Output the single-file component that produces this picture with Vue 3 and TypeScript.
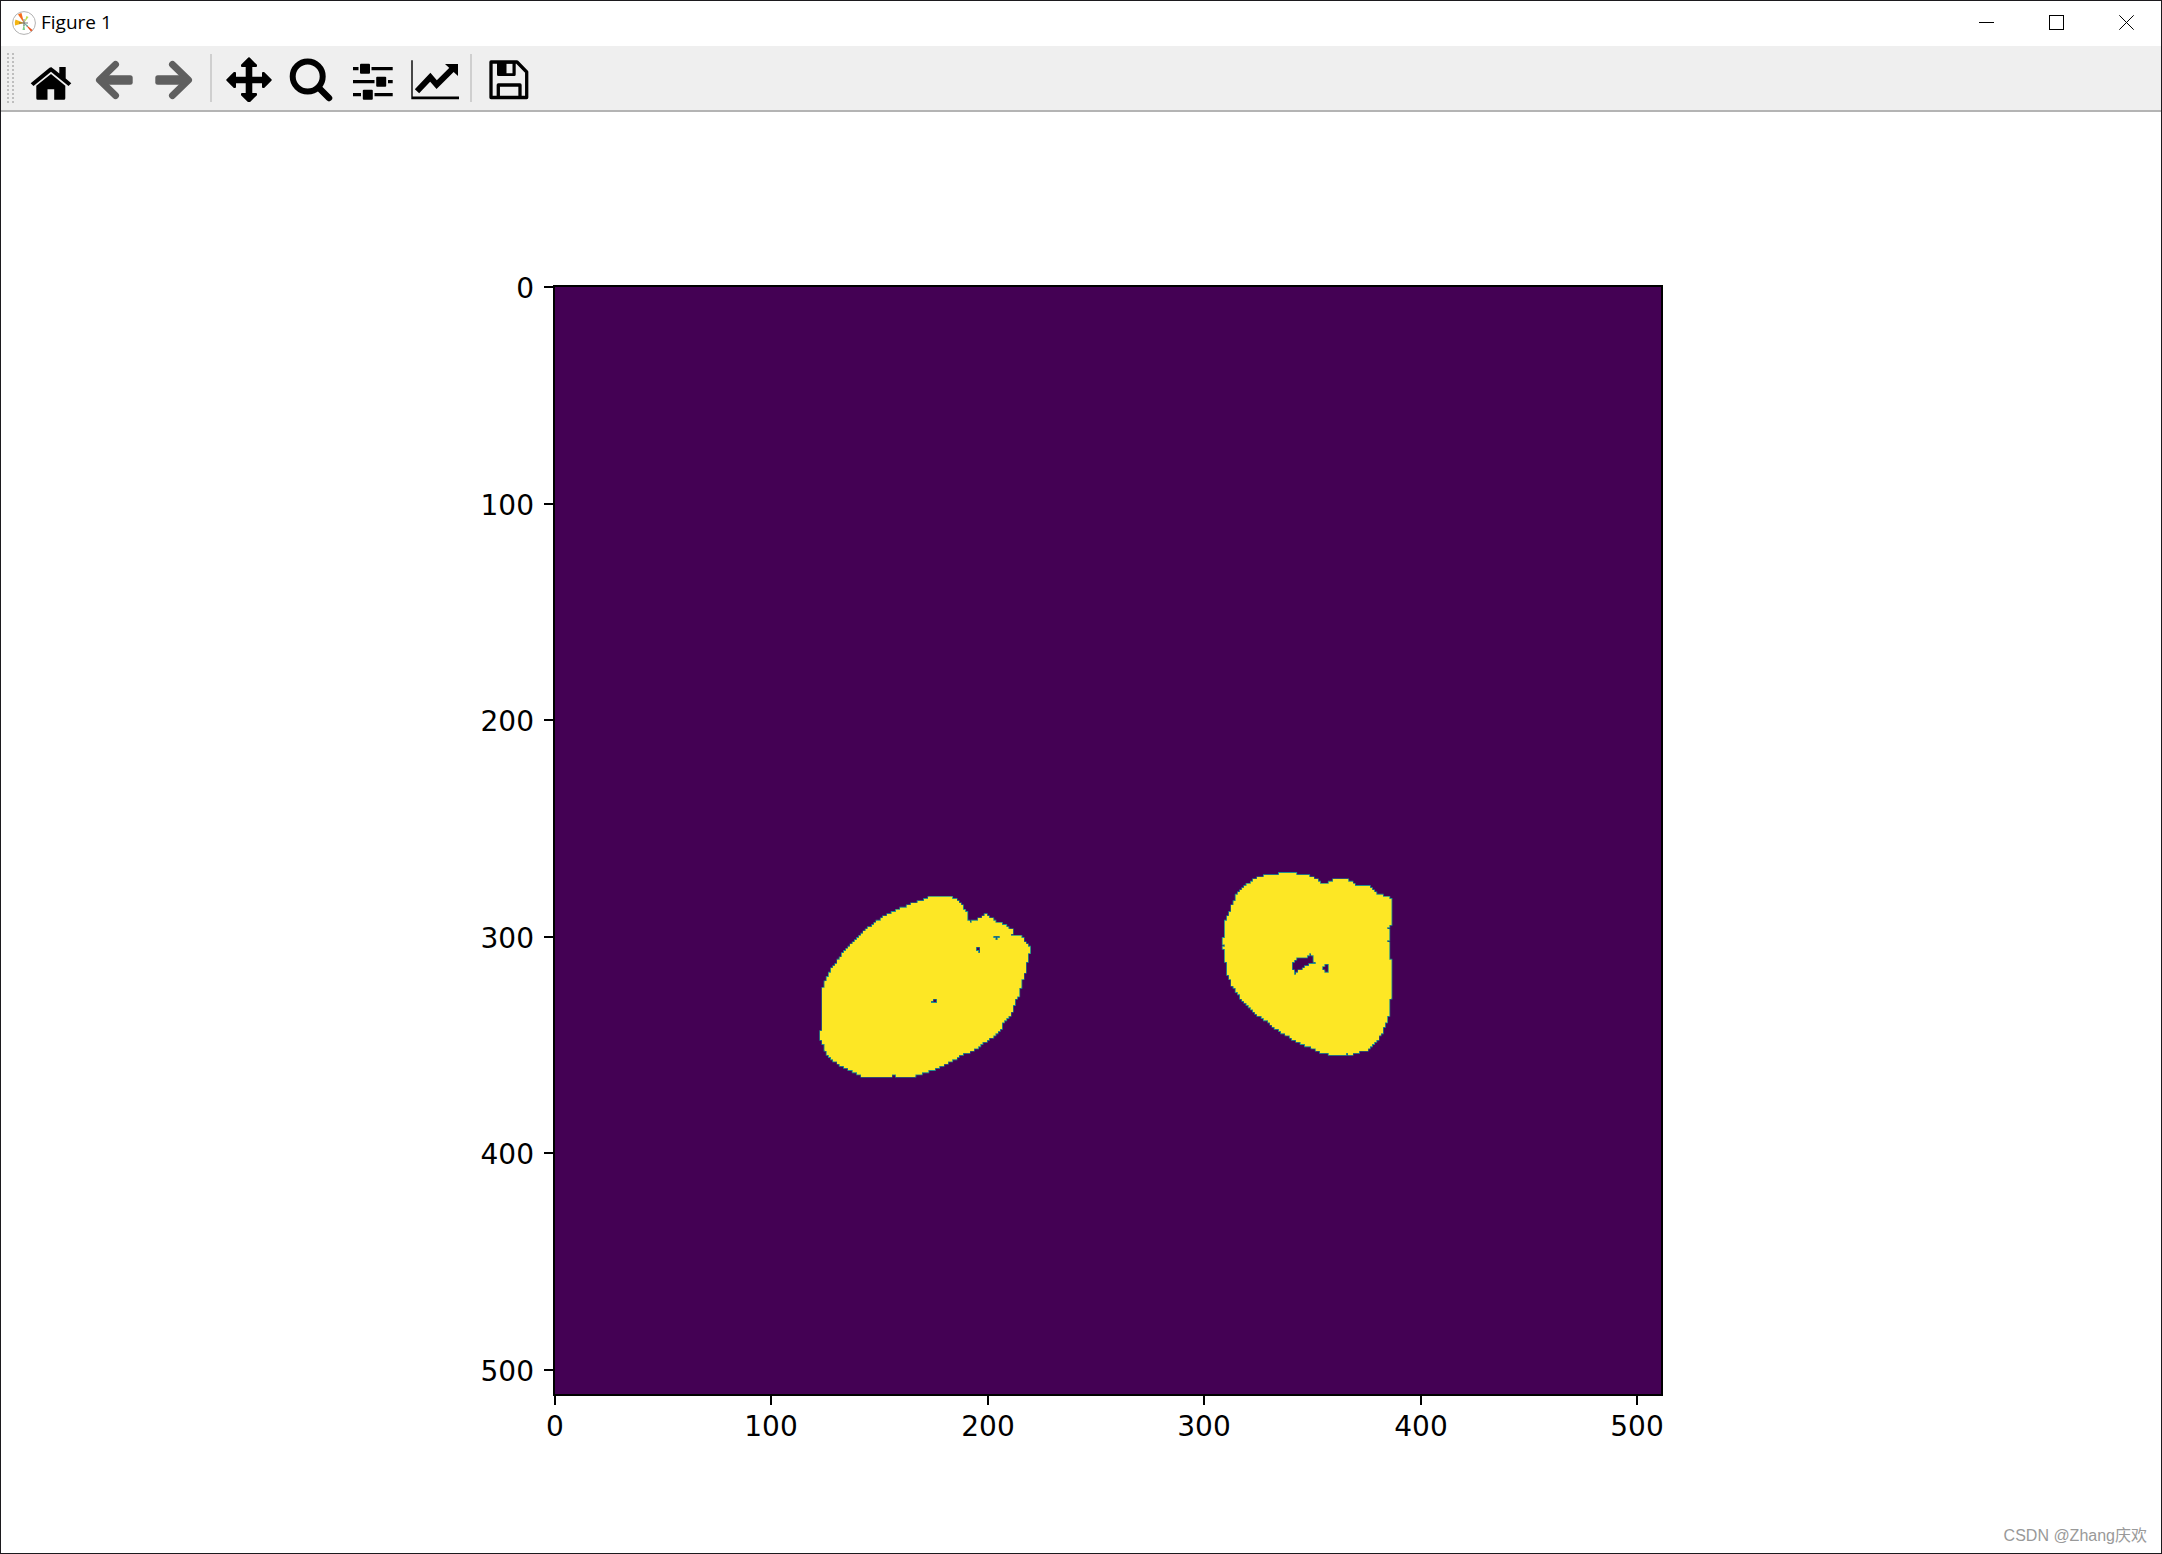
<script setup lang="ts">
type Point = [number, number]

const CELLS = 512
const LEFT = 553
const TOP = 174
const WIDTH = 1108
const HEIGHT = 1109
const ticks: number[] = [0, 100, 200, 300, 400, 500]

const tickX = (v: number): number => Math.round(LEFT + ((v + 0.5) * WIDTH) / CELLS)
const tickY = (v: number): number => Math.round(TOP + ((v + 0.5) * HEIGHT) / CELLS)

// Contours of the segmented regions and their holes, in image cells.
const contours: Point[][] = [
  [
    [174, 282], [183, 282], [185, 283], [187, 284.6], [189, 287], [191, 289.5], [191, 293],
    [192.5, 294], [195, 292.6], [198, 292], [199.6, 290], [202, 292], [204.5, 293.6], [208, 295],
    [211, 297], [212.4, 298], [211, 300], [216, 300], [217.6, 303], [219, 304.6], [220.4, 306.6],
    [219, 308.4], [218, 315.4], [216, 321.6], [215, 327], [213, 330], [211, 336], [207.4, 340],
    [207, 343], [202, 347], [195.4, 351.6], [187.6, 355.4], [177.6, 360.8], [169, 364],
    [165, 365], [156.5, 364.4], [156, 365], [143, 365], [138.4, 363], [130.6, 358.4],
    [127.2, 356], [125, 352.4], [124, 348.4], [123, 347.6], [123, 344.6], [124, 344],
    [124, 324.6], [125.2, 322], [128.4, 315.4], [133.8, 308], [142.2, 299.4], [149, 293.4],
    [155.4, 289.6], [164.6, 285.6], [170.8, 283.6],
  ],
  [[195, 305], [197, 305], [197, 308], [196, 308], [196, 307], [195, 307]],
  [[203, 300], [206, 300], [206, 301], [205, 301], [205, 302], [204, 302], [204, 301], [203, 301]],
  [[175, 329], [177, 329], [177, 331], [174, 331], [174, 330], [175, 330]],
  [
    [335, 271], [342, 271], [343, 272], [348.6, 272.4], [352, 274], [354.4, 276], [357, 276.2],
    [358.2, 275], [361, 274.2], [367, 274.2], [370.6, 277], [376.4, 277.4], [380, 280.4],
    [386.4, 282.6], [387.4, 283.4], [387.4, 289], [386, 290], [387.4, 291.4], [387.4, 293.6],
    [385.4, 296.4], [386.4, 298.4], [386, 302], [385.4, 302], [385.4, 303], [386.4, 303],
    [386.4, 311], [387.4, 311.4], [387.4, 328.6], [386.4, 329], [386.4, 334.6], [384, 340.8],
    [382.4, 344.8], [380, 348.4], [375.4, 352.6], [369.4, 354.2], [367.8, 355], [366, 354.2],
    [365, 355], [360.4, 355], [355.4, 354], [349.4, 351.4], [343, 348.4], [335.4, 344.2],
    [330.8, 340.2], [324, 335.6], [317.8, 329.2], [313.2, 322.2], [311.4, 317.6],
    [311.4, 312.2], [310.4, 312], [310.2, 306], [309.2, 306], [309.2, 305], [310.2, 305],
    [310.2, 304.4], [309.2, 304.4], [309.2, 301.4], [310.4, 301], [310.4, 293.4], [312.6, 288.4],
    [315.4, 281.4], [318.6, 277.6], [324.8, 273.6], [328.6, 272.4], [334.8, 272],
  ],
  [
    [341, 312.2], [343.4, 310], [347.2, 310], [349.2, 308], [351.2, 309.8], [351.5, 311.8],
    [352.5, 313], [348.6, 313.6], [344.8, 316], [342.8, 318.2], [341.2, 316],
  ],
  [[355, 315], [356.4, 313], [358.4, 313], [358.4, 316], [356.8, 317.2]],
]

// Fills every cell whose centre lies inside the contours, one run per row.
function maskPath(): string {
  let d = ''
  for (let row = 0; row < CELLS; row++) {
    const y = row + 0.5
    const hits: number[] = []
    for (const ring of contours) {
      ring.forEach(([x1, y1], i) => {
        const [x2, y2] = ring[(i + 1) % ring.length]
        if (y1 <= y !== y2 <= y) hits.push(x1 + ((y - y1) / (y2 - y1)) * (x2 - x1))
      })
    }
    hits.sort((a, b) => a - b)
    for (let i = 0; i + 1 < hits.length; i += 2) {
      const from = Math.round(hits[i])
      const to = Math.round(hits[i + 1])
      if (to > from) d += `M${from} ${row}H${to}V${row + 1}H${from}Z`
    }
  }
  return d
}

const mask = maskPath()
</script>

<template>
  <main class="window">
    <header class="titlebar">
      <svg class="logo" viewBox="0 0 24 24" aria-hidden="true">
        <circle cx="12" cy="12" r="11.4" fill="#fff" stroke="#b2b2b2" />
        <path d="M12 12 6 3.500A10 10 0 0 1 9.500 2Z" fill="#f46d1b" />
        <path d="M12 12 3 14.500A9 9 0 0 1 3.500 8.500Z" fill="#f5b512" />
        <path d="M12 12 14.500 5 16.500 6Z" fill="#b9e04a" />
        <path d="M12 12 13 19H10.500Z" fill="#7fd08c" />
        <path d="M12 12 20.500 19 19 20.500Z" fill="#e8501c" />
        <path d="M12 12 16 14.500 15 16Z" fill="#5cb8a8" />
        <path d="M7 12H16M12 8V15" stroke="#555" stroke-width=".8" />
      </svg>
      <h1 class="title">Figure 1</h1>
      <div class="controls">
        <button type="button" class="control" aria-label="Minimize">
          <svg viewBox="0 0 15 15" shape-rendering="crispEdges"><path d="M0 7.500H15" /></svg>
        </button>
        <button type="button" class="control" aria-label="Maximize">
          <svg viewBox="0 0 15 15" shape-rendering="crispEdges"><path d="M.5.5H14.500V14.500H.5Z" /></svg>
        </button>
        <button type="button" class="control" aria-label="Close">
          <svg viewBox="0 0 15 15"><path d="M.3.3 14.700 14.700M14.700.3.3 14.700" /></svg>
        </button>
      </div>
    </header>

    <nav class="toolbar" aria-label="Figure tools">
      <span class="grip"></span>
      <button type="button" class="tool" aria-label="Home">
        <svg viewBox="0 0 48 48">
          <path d="M24 13 28 16 32.300 19.500V13H38.700V24.500L44.300 29.300 41.500 31.900 24 17.800 6.500 31.900 3.700 29.300 22.500 13.700Q24 12.600 25.500 13.700Z" />
          <path d="M24 20 38.300 31.700V44.200Q38.300 45.700 36.800 45.700H27.200V35.300H20.500V45.700H10.800Q9.300 45.700 9.300 44.200V31.700Z" />
        </svg>
      </button>
      <button type="button" class="tool dim" aria-label="Back">
        <svg viewBox="0 0 48 48">
          <path d="M26.500 10.500 10.500 26 26.500 41.500" class="head" />
          <rect x="12" y="21.300" width="31.700" height="9.400" rx="2.500" />
        </svg>
      </button>
      <button type="button" class="tool dim" aria-label="Forward">
        <svg viewBox="0 0 48 48">
          <path d="M21.500 10.500 37.500 26 21.500 41.500" class="head" />
          <rect x="4.300" y="21.300" width="31.700" height="9.400" rx="2.500" />
        </svg>
      </button>
      <span class="separator"></span>
      <button type="button" class="tool" aria-label="Pan">
        <svg viewBox="0 0 48 48">
          <path
            stroke="#000" stroke-width="2" stroke-linejoin="round"
            d="M24 4.300 31 11.300V12H26.300V23.700H38V19H38.700L45.700 26 38.700 33H38V28.300H26.300V40H31V40.700L24 47.700 17 40.700V40H21.700V28.300H10V33H9.300L2.300 26 9.300 19H10V23.700H21.700V12H17V11.300Z"
          />
        </svg>
      </button>
      <button type="button" class="tool" aria-label="Zoom">
        <svg viewBox="0 0 48 48">
          <circle cx="20.700" cy="22.500" r="15" fill="none" stroke="#000" stroke-width="6" />
          <path d="M32 34 42 44" fill="none" stroke="#000" stroke-width="6.500" stroke-linecap="round" />
        </svg>
      </button>
      <button type="button" class="tool" aria-label="Configure subplots">
        <svg viewBox="0 0 48 48">
          <path d="M4 14.700H9.500M22.500 14.700H43.700M4 27.700H25.500M39 27.700H43.700M4 40.700H12M25.500 40.700H43.700" stroke="#000" stroke-width="3.200" />
          <rect x="11" y="9.700" width="10" height="10" rx="1" />
          <rect x="27.200" y="22.700" width="10" height="10" rx="1" />
          <rect x="13.800" y="35.700" width="10" height="10" rx="1" />
        </svg>
      </button>
      <button type="button" class="tool" aria-label="Edit axes">
        <svg viewBox="0 0 48 48">
          <path d="M.3 6.300H1.700V42.500H48V45.300H.3Z" />
          <path d="M6 37.300 19.300 23.300 25.700 30.700 42 14.300" fill="none" stroke="#000" stroke-width="6" />
          <path d="M34 10H47V22Z" />
        </svg>
      </button>
      <span class="separator"></span>
      <button type="button" class="tool" aria-label="Save">
        <svg viewBox="0 0 48 48">
          <path d="M6 8H32L41.700 18V43.500H6Z" fill="none" stroke="#000" stroke-width="3.300" stroke-linejoin="round" />
          <path fill-rule="evenodd" d="M12 7H30.700V20.500Q30.700 22 29.200 22H13.500Q12 22 12 20.500ZM21.500 9.500V19.300H27.500V9.500Z" />
          <path d="M13.300 43V31H35V43" fill="none" stroke="#000" stroke-width="3.300" stroke-linejoin="round" />
        </svg>
      </button>
    </nav>

    <section class="canvas">
      <svg class="figure" viewBox="0 0 2160 1441" role="img" aria-label="Segmentation mask">
        <rect :x="LEFT" :y="TOP" :width="WIDTH" :height="HEIGHT" fill="#440154" />
        <g :transform="`translate(${LEFT} ${TOP}) scale(${WIDTH / CELLS} ${HEIGHT / CELLS})`">
          <path :d="mask" fill="none" stroke="#21918c" stroke-width=".8" />
          <path :d="mask" fill="#fde725" />
          <path :d="mask" fill="#fde725" shape-rendering="crispEdges" />
        </g>
        <rect class="axis" :x="LEFT" :y="TOP" :width="WIDTH" :height="HEIGHT" />
        <g v-for="t in ticks" :key="t">
          <path class="axis" :d="`M${LEFT} ${tickY(t)}h-10M${tickX(t)} ${TOP + HEIGHT}v10`" />
          <text class="label end" :x="LEFT - 20" :y="tickY(t) + 11">{{ t }}</text>
          <text class="label middle" :x="tickX(t)" :y="TOP + HEIGHT + 41">{{ t }}</text>
        </g>
      </svg>
      <p class="watermark">CSDN @Zhang庆欢</p>
    </section>
  </main>
</template>

<style>
body {
  margin: 0;
  background: #fff;
}
</style>

<style scoped>
.window {
  box-sizing: border-box;
  width: 100%;
  border: 1px solid #1c1a1e;
  background: #fff;
}
.titlebar {
  box-sizing: border-box;
  display: flex;
  align-items: center;
  height: 45px;
  padding: 0 0 2px 11px;
  gap: 5px;
}
.logo {
  width: 24px;
  height: 24px;
}
.title {
  margin: 0;
  padding-bottom: 2px;
  font: 400 19px/24px "Segoe UI", "Open Sans", sans-serif;
  color: #000;
}
.controls {
  display: flex;
  gap: 1px;
  height: 100%;
  margin-left: auto;
}
button {
  display: flex;
  align-items: center;
  justify-content: center;
  padding: 0;
  border: 0;
  background: none;
}
.control {
  width: 69px;
  height: 100%;
}
.control svg {
  width: 15px;
  height: 15px;
  fill: none;
  stroke: #000;
  stroke-width: 1;
}
.toolbar {
  display: flex;
  align-items: center;
  gap: 4px;
  height: 64px;
  padding-left: 6px;
  background: #efefef;
  border-bottom: 2px solid #b4b4b4;
}
.grip {
  width: 7px;
  height: 54px;
  margin-right: 4px;
  background: repeating-linear-gradient(#efefef 0 2px, transparent 2px 4px),
    linear-gradient(90deg, #bebebe 2px, transparent 2px 5px, #bebebe 5px);
}
.tool {
  width: 58px;
  height: 60px;
}
.tool svg {
  width: 48px;
  height: 48px;
}
.dim {
  fill: #5f5f5f;
  stroke: none;
}
.head {
  fill: none;
  stroke: #5f5f5f;
  stroke-width: 7;
  stroke-linecap: round;
  stroke-linejoin: round;
}
.separator {
  width: 2px;
  height: 48px;
  margin: 0 4px 0 2px;
  background: #cfcfcf;
}
.canvas {
  position: relative;
}
.figure {
  display: block;
  width: 100%;
  height: auto;
}
.axis {
  fill: none;
  stroke: #000;
  stroke-width: 2;
}
.label {
  font: 28px "DejaVu Sans", sans-serif;
  fill: #000;
}
.end {
  text-anchor: end;
}
.middle {
  text-anchor: middle;
}
.watermark {
  position: absolute;
  right: 14px;
  bottom: 5px;
  margin: 0;
  font: 16px/24px "Liberation Sans", "Noto Sans CJK SC", sans-serif;
  color: #999;
}
</style>
